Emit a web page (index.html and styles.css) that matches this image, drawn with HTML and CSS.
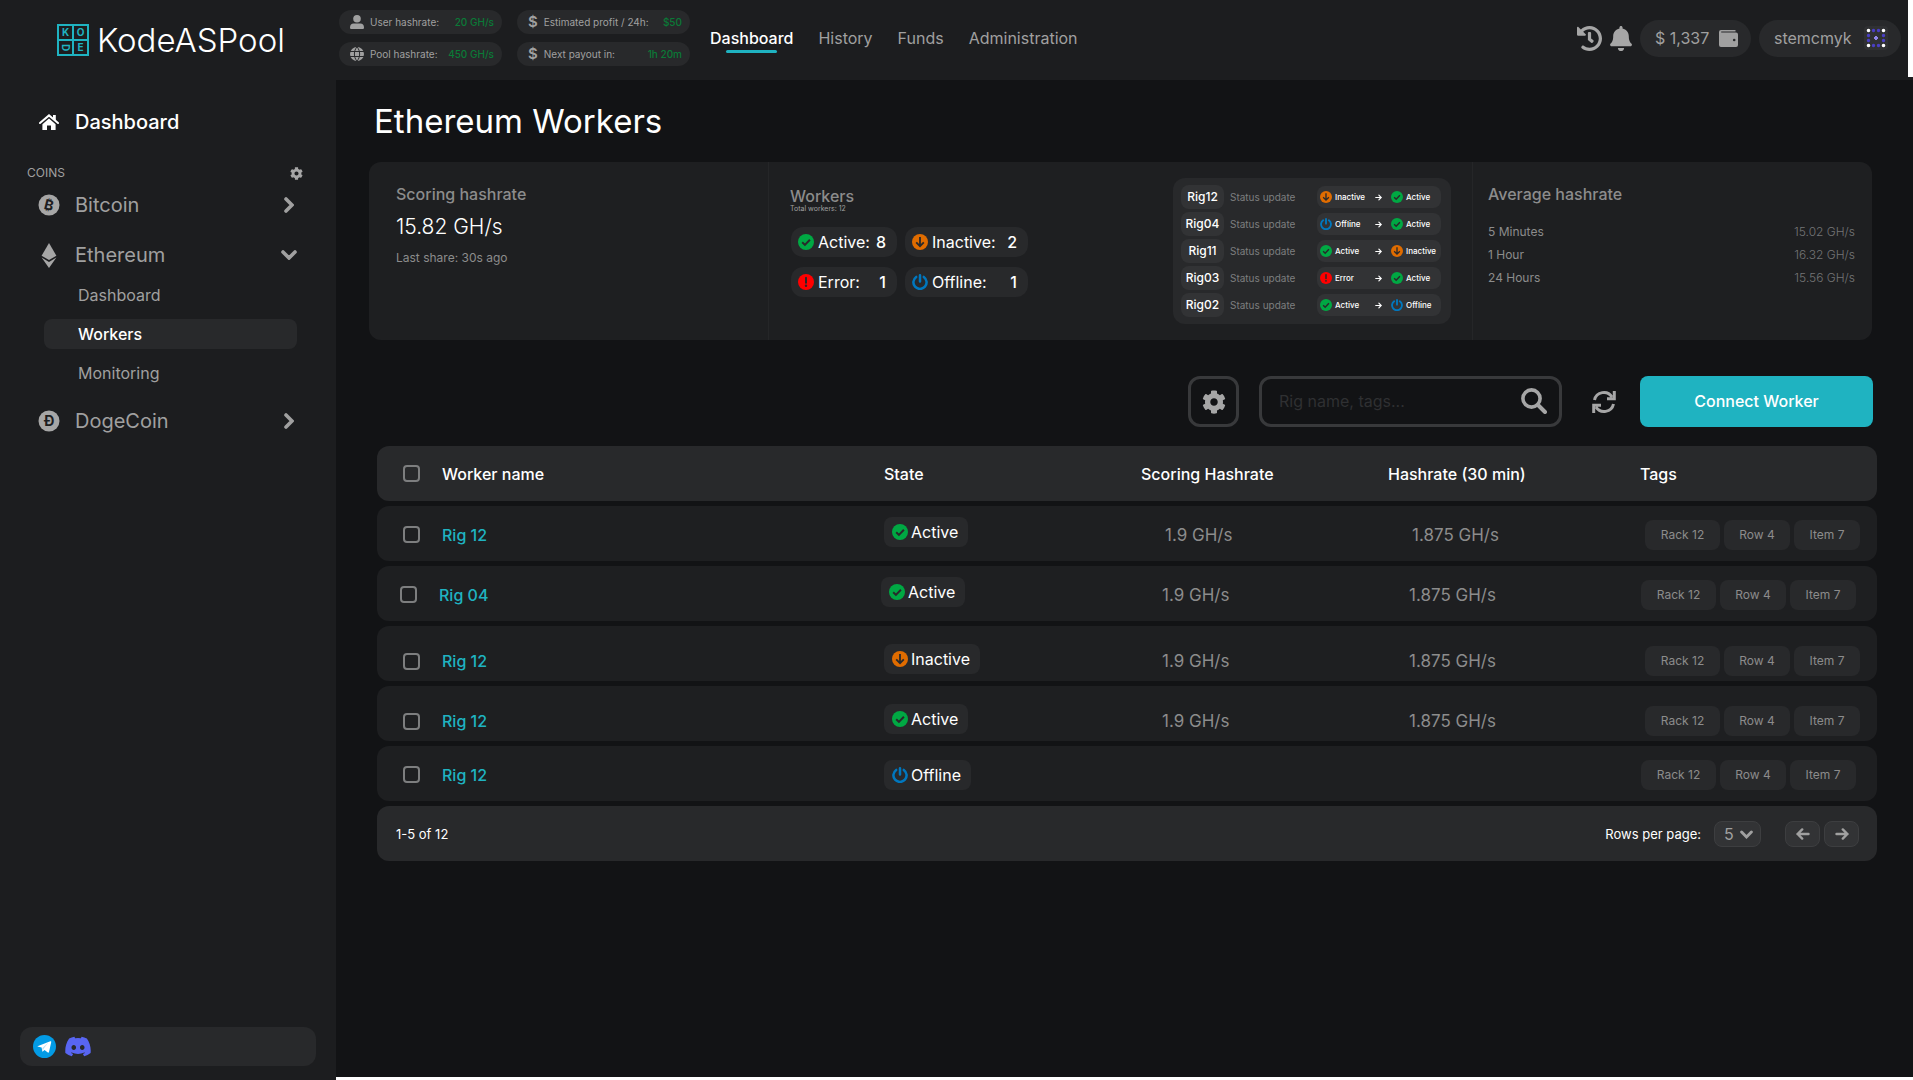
FILE: index.html
```html
<!DOCTYPE html>
<html lang="en">
<head>
    <meta charset="UTF-8">
    <meta name="viewport" content="width=device-width, initial-scale=1.0">
    <title>KodeASPool - Ethereum Workers</title>
    <link rel="stylesheet" href="styles.css">
</head>
<body>
    <!-- Icon sprite -->
    <svg class="sprite" aria-hidden="true">
        <symbol id="i-check" viewBox="0 0 16 16"><circle cx="8" cy="8" r="8" fill="#00a843"/><path d="M4.2 8.3l2.7 2.6 5-5.2" fill="none" stroke="#28292b" stroke-width="2"/></symbol>
        <symbol id="i-down" viewBox="0 0 16 16"><circle cx="8" cy="8" r="8" fill="#e06c00"/><path d="M8 3v9M4.2 8.4L8 12.2l3.8-3.8" fill="none" stroke="#28292b" stroke-width="1.8"/></symbol>
        <symbol id="i-error" viewBox="0 0 16 16"><circle cx="8" cy="8" r="8" fill="#f00"/><path d="M8 3.8v5" stroke="#28292b" stroke-width="2" stroke-linecap="round"/><circle cx="8" cy="11.8" r="1.2" fill="#28292b"/></symbol>
        <symbol id="i-power" viewBox="0 0 16 16"><path d="M4.200 2.900a6.600 6.600 0 1 0 7.600 0M8 1.300v6.200" fill="none" stroke="#0077be" stroke-width="2.500" stroke-linecap="round"/></symbol>
        <symbol id="i-gear" viewBox="0 0 512 512"><path fill="currentColor" d="M487.4 315.7l-42.6-24.6c4.3-23.2 4.3-47 0-70.2l42.6-24.6c4.9-2.8 7.1-8.6 5.5-14-11.1-35.6-30-67.8-54.7-94.6-3.8-4.1-10-5.1-14.8-2.3L380.8 110c-17.9-15.4-38.5-27.3-60.8-35.1V25.8c0-5.6-3.9-10.5-9.4-11.7-36.7-8.2-74.3-7.8-109.2 0-5.5 1.2-9.4 6.1-9.4 11.7V75c-22.2 7.9-42.8 19.8-60.8 35.1L88.7 85.5c-4.9-2.8-11-1.9-14.8 2.3-24.7 26.7-43.6 58.9-54.7 94.6-1.7 5.4.6 11.2 5.5 14L67.3 221c-4.3 23.2-4.3 47 0 70.2l-42.6 24.6c-4.9 2.8-7.1 8.6-5.5 14 11.1 35.6 30 67.8 54.7 94.6 3.8 4.1 10 5.1 14.8 2.3l42.6-24.6c17.9 15.4 38.5 27.3 60.8 35.1v49.2c0 5.6 3.9 10.5 9.4 11.7 36.7 8.2 74.3 7.8 109.2 0 5.5-1.2 9.4-6.1 9.4-11.7v-49.2c22.2-7.9 42.8-19.8 60.8-35.1l42.6 24.6c4.9 2.8 11 1.9 14.8-2.3 24.7-26.7 43.6-58.9 54.7-94.6 1.5-5.5-.7-11.3-5.6-14.1zM256 336c-44.1 0-80-35.9-80-80s35.9-80 80-80 80 35.9 80 80-35.9 80-80 80z"/></symbol>
        <symbol id="i-right" viewBox="0 0 10 16"><path d="M2 2l6 6-6 6" fill="none" stroke="currentColor" stroke-width="3.6" stroke-linecap="round"/></symbol>
        <symbol id="i-chevdown" viewBox="0 0 16 10"><path d="M2 2l6 6 6-6" fill="none" stroke="currentColor" stroke-width="3.6" stroke-linecap="round"/></symbol>
        <symbol id="i-arrow" viewBox="0 0 14 12"><path d="M1.5 6h11M7.8 1.4L12.4 6l-4.6 4.6" fill="none" stroke="currentColor" stroke-width="2.4" stroke-linecap="round"/></symbol>
    </svg>

    <!-- Sidebar -->
    <aside class="sidebar">
        <a class="logo" href="#">
            <svg width="32" height="32" viewBox="0 0 32 32" fill="none" stroke="#1fb3c1" stroke-width="2">
                <path d="M1 1h30v30H1zM16 1v30M1 16h30"/>
                <g class="logo-letters">
                    <text x="8.5" y="12">K</text>
                    <text x="23.5" y="12">O</text>
                    <text x="8.5" y="27" transform="rotate(90 8.5 23.5)">D</text>
                    <text x="23.5" y="27">E</text>
                </g>
            </svg>
            <span>KodeASPool</span>
        </a>

        <nav class="side-nav">
            <a class="side-item active" href="#">
                <svg width="20" height="17" viewBox="0 0 20 17">
                    <path d="M1 9l9-7.6L19 9" fill="none" stroke="currentColor" stroke-width="2" stroke-linecap="round"/>
                    <path d="M14 1h2.8v5.4L14 4zM10 4.6l6.6 5.6V16H12v-4.6H8V16H3.400v-5.800z" fill="currentColor"/>
                </svg>
                <span>Dashboard</span>
            </a>
            <div class="side-title">
                <span>COINS</span>
                <button class="icon-button" aria-label="Coin settings"><svg width="13" height="13"><use href="#i-gear"/></svg></button>
            </div>
            <a class="side-item" href="#">
                <svg width="22" height="22" viewBox="0 0 22 22"><circle cx="11" cy="11" r="10.500" fill="#a6a6a6"/><text class="coin-sign" x="11" y="16" transform="rotate(14 11 11)">₿</text></svg>
                <span>Bitcoin</span>
                <svg class="chevron" width="10" height="16"><use href="#i-right"/></svg>
            </a>
            <a class="side-item" href="#">
                <svg width="22" height="25" viewBox="0 0 22 25" fill="#a6a6a6"><path d="M11 0l7.400 12.700L11 17 3.600 12.700z"/><path d="M3.600 14.500L11 18.900l7.400-4.400L11 25z"/></svg>
                <span>Ethereum</span>
                <svg class="chevron" width="16" height="10"><use href="#i-chevdown"/></svg>
            </a>
            <div class="sub-nav">
                <a href="#">Dashboard</a>
                <a class="active" href="#">Workers</a>
                <a href="#">Monitoring</a>
            </div>
            <a class="side-item" href="#">
                <svg width="22" height="22" viewBox="0 0 22 22"><circle cx="11" cy="11" r="10.500" fill="#a6a6a6"/><text class="coin-sign" x="11" y="16">Ð</text></svg>
                <span>DogeCoin</span>
                <svg class="chevron" width="10" height="16"><use href="#i-right"/></svg>
            </a>
        </nav>

        <div class="social">
            <a href="#" aria-label="Telegram">
                <svg width="23" height="23" viewBox="0 0 23 23"><circle cx="11.500" cy="11.500" r="11.500" fill="#039be5"/><path d="M4.500 11.300L17.300 6.300c.6-.2 1.100.1.9 1L16 16.900c-.2.800-.6.900-1.200.600l-3.300-2.500-1.700 1.600c-.3.200-.5.100-.5-.3l-.7-3.700-4-1.100z" fill="#fff"/><path d="M9.400 16.300v-3.400l6-5.400-4.600 6z" fill="#bcdff3"/></svg>
            </a>
            <a href="#" aria-label="Discord">
                <svg width="26" height="21" viewBox="20 30 600 452"><path fill="#5865f2" d="M524.531,69.836a1.5,1.5,0,0,0-.764-.7A485.065,485.065,0,0,0,404.081,32.03a1.816,1.816,0,0,0-1.923.91,337.461,337.461,0,0,0-14.9,30.6,447.848,447.848,0,0,0-134.426,0,309.541,309.541,0,0,0-15.135-30.6,1.89,1.89,0,0,0-1.924-.91A483.689,483.689,0,0,0,116.085,69.137a1.712,1.712,0,0,0-.788.676C39.068,183.651,18.186,294.69,28.43,404.354a2.016,2.016,0,0,0,.765,1.375A487.666,487.666,0,0,0,176.02,479.918a1.9,1.9,0,0,0,2.063-.676A348.2,348.2,0,0,0,208.12,430.4a1.86,1.86,0,0,0-1.019-2.588,321.173,321.173,0,0,1-45.868-21.853,1.885,1.885,0,0,1-.185-3.126c3.082-2.309,6.166-4.711,9.109-7.137a1.819,1.819,0,0,1,1.9-.256c96.229,43.917,200.41,43.917,295.5,0a1.812,1.812,0,0,1,1.924.233c2.944,2.426,6.027,4.851,9.132,7.16a1.884,1.884,0,0,1-.162,3.126,301.407,301.407,0,0,1-45.89,21.83,1.875,1.875,0,0,0-1,2.611,391.055,391.055,0,0,0,30.014,48.815,1.864,1.864,0,0,0,2.063.7A486.048,486.048,0,0,0,610.7,405.729a1.882,1.882,0,0,0,.765-1.352C623.729,277.594,590.933,167.465,524.531,69.836ZM222.491,337.58c-28.972,0-52.844-26.587-52.844-59.239S193.056,219.1,222.491,219.1c29.665,0,53.306,26.82,52.843,59.239C275.334,310.993,251.924,337.58,222.491,337.58Zm195.38,0c-28.971,0-52.843-26.587-52.843-59.239S388.437,219.1,417.871,219.1c29.667,0,53.307,26.82,52.844,59.239C470.715,310.993,447.538,337.58,417.871,337.58Z"/></svg>
            </a>
        </div>
    </aside>

    <div class="page">
        <!-- Top bar -->
        <header class="topbar">
            <div class="quick-stats">
                <div class="quick">
                    <svg width="14" height="14" viewBox="0 0 14 14" fill="currentColor"><circle cx="7" cy="3.800" r="3.800"/><path d="M0 12.500C0 9.800 1.500 8.700 3.500 8.500h7c2 .2 3.500 1.300 3.500 4 0 1-.6 1.500-1.500 1.500h-11C.6 14 0 13.500 0 12.500z"/></svg>
                    <span>User hashrate:</span><b>20 GH/s</b>
                </div>
                <div class="quick">
                    <i class="dollar">$</i>
                    <span>Estimated profit / 24h:</span><b>$50</b>
                </div>
                <div class="quick">
                    <svg width="14" height="14" viewBox="0 0 14 14"><circle cx="7" cy="7" r="7" fill="currentColor"/><path d="M0 4.500h14M0 9.500h14M7 0C3.500 3.500 3.500 10.500 7 14c3.500-3.500 3.500-10.500 0-14z" fill="none" stroke="#28292b"/></svg>
                    <span>Pool hashrate:</span><b>450 GH/s</b>
                </div>
                <div class="quick">
                    <i class="dollar">$</i>
                    <span>Next payout in:</span><b>1h 20m</b>
                </div>
            </div>
            <nav class="top-nav">
                <a class="active" href="#">Dashboard</a>
                <a href="#">History</a>
                <a href="#">Funds</a>
                <a href="#">Administration</a>
            </nav>
            <div class="account">
                <button class="icon-button" aria-label="Activity">
                    <svg width="25" height="25" viewBox="8 8 496 496"><path fill="currentColor" d="M504 255.531c.253 136.64-111.18 248.372-247.82 248.468-59.015.042-113.223-20.53-155.822-54.911-11.077-8.94-11.905-25.541-1.839-35.607l11.267-11.267c8.609-8.609 22.353-9.551 31.891-1.984C173.062 425.135 212.781 440 256 440c101.705 0 184-82.311 184-184 0-101.705-82.311-184-184-184-48.814 0-93.149 18.969-126.068 49.932l50.754 50.754c10.08 10.08 2.941 27.314-11.313 27.314H24c-8.837 0-16-7.163-16-16V38.627c0-14.254 17.234-21.393 27.314-11.314l49.372 49.372C129.209 34.136 189.552 8 256 8c136.81 0 247.747 110.78 248 247.531zm-180.912 78.784l9.823-12.63c8.138-10.463 6.253-25.542-4.21-33.679L288 256.349V152c0-13.255-10.745-24-24-24h-16c-13.255 0-24 10.745-24 24v135.651l65.409 50.874c10.463 8.137 25.541 6.253 33.679-4.21z"/></svg>
                </button>
                <button class="icon-button" aria-label="Notifications">
                    <svg width="22" height="25" viewBox="0 0 448 512"><path fill="currentColor" d="M224 512c35.320 0 63.970-28.650 63.970-64H160.030c0 35.350 28.650 64 63.970 64zm215.390-149.710c-19.320-20.760-55.470-51.990-55.470-154.290 0-77.700-54.480-139.900-127.940-155.160V32c0-17.670-14.320-32-31.980-32s-31.980 14.330-31.980 32v20.840C118.560 68.100 64.080 130.300 64.080 208c0 102.300-36.150 133.530-55.470 154.290-6 6.450-8.660 14.160-8.610 21.710.11 16.400 12.980 32 32.100 32h383.800c19.120 0 32-15.600 32.100-32 .05-7.550-2.610-15.270-8.610-21.710z"/></svg>
                </button>
                <button class="account-pill">
                    <span>$ 1,337</span>
                    <svg width="19" height="17" viewBox="0 0 19 17"><path d="M2 0h14.500v1.500H2.200v1H17a2 2 0 0 1 2 2V15a2 2 0 0 1-2 2H2a2 2 0 0 1-2-2V2a2 2 0 0 1 2-2z" fill="currentColor"/><circle cx="15.200" cy="10" r="1.300" fill="#28292b"/></svg>
                </button>
                <button class="account-pill user">
                    <span>stemcmyk</span>
                    <svg width="24" height="24" viewBox="0 0 24 24"><rect width="24" height="24" rx="4" fill="#303133"/><path d="M9.500 4.500h.01M14.500 4.500h.01M9.500 19.500h.01M14.500 19.500h.01M4.500 9.500h.01M4.500 14.500h.01M19.500 9.500h.01M19.500 14.500h.01" stroke="#4a3fc4" stroke-width="3.400" stroke-linecap="round"/><path d="M4.500 4.500h.01M19.500 4.500h.01M4.500 19.500h.01M19.500 19.500h.01" stroke="#fff" stroke-width="3.600" stroke-linecap="round"/><path d="M12 10v4M10 12h4" stroke="#8f86e8" stroke-width="2"/></svg>
                </button>
            </div>
        </header>

        <main class="content">
            <h1>Ethereum Workers</h1>

            <!-- Summary -->
            <section class="summary">
                <div class="panel">
                    <h2>Scoring hashrate</h2>
                    <p class="big">15.82 GH/s</p>
                    <p class="note">Last share: 30s ago</p>
                </div>
                <div class="panel workers">
                    <div>
                        <h2>Workers</h2>
                        <p class="tiny">Total workers: 12</p>
                        <div class="counts">
                            <div class="count"><svg width="16" height="16"><use href="#i-check"/></svg><span>Active:</span><b>8</b></div>
                            <div class="count"><svg width="16" height="16"><use href="#i-down"/></svg><span>Inactive:</span><b>2</b></div>
                            <div class="count"><svg width="16" height="16"><use href="#i-error"/></svg><span>Error:</span><b>1</b></div>
                            <div class="count"><svg width="16" height="16"><use href="#i-power"/></svg><span>Offline:</span><b>1</b></div>
                        </div>
                    </div>
                    <ul class="updates">
                        <li>
                            <span class="rig">Rig12</span><span class="what">Status update</span>
                            <span class="change"><svg width="12" height="12"><use href="#i-down"/></svg><span>Inactive</span><svg class="to" width="7" height="7"><use href="#i-arrow"/></svg><svg width="12" height="12"><use href="#i-check"/></svg><span>Active</span></span>
                        </li>
                        <li>
                            <span class="rig">Rig04</span><span class="what">Status update</span>
                            <span class="change"><svg width="12" height="12"><use href="#i-power"/></svg><span>Offline</span><svg class="to" width="7" height="7"><use href="#i-arrow"/></svg><svg width="12" height="12"><use href="#i-check"/></svg><span>Active</span></span>
                        </li>
                        <li>
                            <span class="rig">Rig11</span><span class="what">Status update</span>
                            <span class="change"><svg width="12" height="12"><use href="#i-check"/></svg><span>Active</span><svg class="to" width="7" height="7"><use href="#i-arrow"/></svg><svg width="12" height="12"><use href="#i-down"/></svg><span>Inactive</span></span>
                        </li>
                        <li>
                            <span class="rig">Rig03</span><span class="what">Status update</span>
                            <span class="change"><svg width="12" height="12"><use href="#i-error"/></svg><span>Error</span><svg class="to" width="7" height="7"><use href="#i-arrow"/></svg><svg width="12" height="12"><use href="#i-check"/></svg><span>Active</span></span>
                        </li>
                        <li>
                            <span class="rig">Rig02</span><span class="what">Status update</span>
                            <span class="change"><svg width="12" height="12"><use href="#i-check"/></svg><span>Active</span><svg class="to" width="7" height="7"><use href="#i-arrow"/></svg><svg width="12" height="12"><use href="#i-power"/></svg><span>Offline</span></span>
                        </li>
                    </ul>
                </div>
                <div class="panel average">
                    <h2>Average hashrate</h2>
                    <dl>
                        <div><dt>5 Minutes</dt><dd>15.02 GH/s</dd></div>
                        <div><dt>1 Hour</dt><dd>16.32 GH/s</dd></div>
                        <div><dt>24 Hours</dt><dd>15.56 GH/s</dd></div>
                    </dl>
                </div>
            </section>

            <!-- Toolbar -->
            <div class="toolbar">
                <button class="square-button" aria-label="Table settings"><svg width="24" height="24"><use href="#i-gear"/></svg></button>
                <form class="search" onsubmit="return false;">
                    <input type="text" placeholder="Rig name, tags..." aria-label="Search rigs">
                    <button class="icon-button" aria-label="Search">
                        <svg width="26" height="26" viewBox="0 0 26 26" fill="none" stroke="currentColor"><circle cx="10.500" cy="10.500" r="8.600" stroke-width="3.600"/><path d="M17 17l7 7" stroke-width="4" stroke-linecap="round"/></svg>
                    </button>
                </form>
                <button class="icon-button refresh" aria-label="Refresh">
                    <svg width="24" height="24" viewBox="0 0 24 24" fill="none" stroke="currentColor" stroke-width="3"><path d="M2.500 10A9.600 9.600 0 0 1 20 7M22.300 1v7.700H15M21.500 14A9.600 9.600 0 0 1 4 17M1.700 23v-7.700H9"/></svg>
                </button>
                <button class="connect">Connect Worker</button>
            </div>

            <!-- Workers table -->
            <table class="rigs">
                <colgroup>
                    <col class="c-check"><col><col class="c-state"><col class="c-score"><col class="c-rate"><col class="c-tags">
                </colgroup>
                <thead>
                    <tr>
                        <th><input type="checkbox" aria-label="Select all"></th>
                        <th>Worker name</th>
                        <th>State</th>
                        <th>Scoring Hashrate</th>
                        <th>Hashrate (30 min)</th>
                        <th>Tags</th>
                    </tr>
                </thead>
                <tbody>
                    <tr>
                        <td><input type="checkbox" aria-label="Select Rig 12"></td>
                        <td><a href="#">Rig 12</a></td>
                        <td class="state"><span class="badge"><svg width="16" height="16"><use href="#i-check"/></svg>Active</span></td>
                        <td class="rate">1.9 GH/s</td>
                        <td class="rate">1.875 GH/s</td>
                        <td class="tags"><div><span>Rack 12</span><span>Row 4</span><span>Item 7</span></div></td>
                    </tr>
                    <tr class="tight">
                        <td><input type="checkbox" aria-label="Select Rig 04"></td>
                        <td><a href="#">Rig 04</a></td>
                        <td class="state"><span class="badge"><svg width="16" height="16"><use href="#i-check"/></svg>Active</span></td>
                        <td class="rate">1.9 GH/s</td>
                        <td class="rate">1.875 GH/s</td>
                        <td class="tags"><div><span>Rack 12</span><span>Row 4</span><span>Item 7</span></div></td>
                    </tr>
                    <tr class="low">
                        <td><input type="checkbox" aria-label="Select Rig 12"></td>
                        <td><a href="#">Rig 12</a></td>
                        <td class="state"><span class="badge"><svg width="16" height="16"><use href="#i-down"/></svg>Inactive</span></td>
                        <td class="rate">1.9 GH/s</td>
                        <td class="rate">1.875 GH/s</td>
                        <td class="tags"><div><span>Rack 12</span><span>Row 4</span><span>Item 7</span></div></td>
                    </tr>
                    <tr class="low">
                        <td><input type="checkbox" aria-label="Select Rig 12"></td>
                        <td><a href="#">Rig 12</a></td>
                        <td class="state"><span class="badge"><svg width="16" height="16"><use href="#i-check"/></svg>Active</span></td>
                        <td class="rate">1.9 GH/s</td>
                        <td class="rate">1.875 GH/s</td>
                        <td class="tags"><div><span>Rack 12</span><span>Row 4</span><span>Item 7</span></div></td>
                    </tr>
                    <tr>
                        <td><input type="checkbox" aria-label="Select Rig 12"></td>
                        <td><a href="#">Rig 12</a></td>
                        <td><span class="badge"><svg width="16" height="16"><use href="#i-power"/></svg>Offline</span></td>
                        <td></td>
                        <td></td>
                        <td class="tags tight"><div><span>Rack 12</span><span>Row 4</span><span>Item 7</span></div></td>
                    </tr>
                </tbody>
            </table>
            <div class="pager">
                <span>1-5 of 12</span>
                <div class="pager-right">
                    <label for="rows">Rows per page:</label>
                    <div class="select">
                        <select id="rows"><option>5</option><option>10</option><option>25</option></select>
                        <svg width="13" height="9"><use href="#i-chevdown"/></svg>
                    </div>
                    <div class="pager-buttons">
                        <button aria-label="Previous page"><svg class="back" width="14" height="12"><use href="#i-arrow"/></svg></button>
                        <button aria-label="Next page"><svg width="14" height="12"><use href="#i-arrow"/></svg></button>
                    </div>
                </div>
            </div>
        </main>
    </div>
</body>
</html>
```
FILE: styles.css
```css
* { box-sizing: border-box; }
body {
    margin: 0;
    min-height: 100vh;
    display: grid;
    grid-template-columns: 336px 1fr;
    background-color: #121315;
    color: #a0a0a0;
    font-family: Inter, "Liberation Sans", sans-serif;
    font-size: 16px;
    line-height: 20px;
}
body::after {
    content: "";
    position: absolute;
    top: 0;
    right: 0;
    width: 5px;
    height: 77px;
    background-color: white;
}
h1, h2, p, ul, dl, dd { margin: 0; padding: 0; }
svg { display: block; flex: none; }
a { color: inherit; text-decoration: none; }
button, input, select {
    font: inherit;
    color: inherit;
    background: none;
    border: none;
    margin: 0;
    padding: 0;
}
button { cursor: pointer; }
.sprite {
    position: absolute;
    width: 0;
    height: 0;
}
.icon-button { color: #a6a6a6; }

/* Sidebar */
.sidebar {
    background-color: #1c1d1f;
    display: flex;
    flex-direction: column;
    padding: 20px 20px 14px;
}
.logo {
    display: flex;
    align-items: center;
    gap: 8px;
    height: 40px;
    padding-left: 37px;
    color: white;
    font-size: 33px;
    font-weight: 300;
}
.logo-letters text {
    fill: #1fb3c1;
    stroke: none;
    font-size: 10px;
    font-weight: 700;
    text-anchor: middle;
}
.side-nav { padding-top: 37px; }
.side-item {
    display: grid;
    grid-template-columns: 22px 1fr 16px;
    align-items: center;
    justify-items: center;
    gap: 15px;
    height: 50px;
    padding: 0 19px 0 18px;
    font-size: 20px;
}
.side-item span { justify-self: start; }
.side-item.active {
    color: white;
    font-weight: 500;
}
.side-title {
    display: flex;
    align-items: center;
    justify-content: space-between;
    height: 32px;
    padding: 0 13px 0 7px;
    margin-top: 10px;
    margin-bottom: -9px;
    font-size: 12px;
}
.coin-sign {
    fill: #1c1d1f;
    font-size: 14px;
    font-weight: 700;
    text-anchor: middle;
}
.sub-nav {
    display: flex;
    flex-direction: column;
    gap: 9px;
    padding: 0 0 8px 24px;
}
.sub-nav a {
    height: 30px;
    margin-right: 19px;
    padding: 5px 34px;
    border-radius: 8px;
}
.sub-nav .active {
    background-color: #28292b;
    color: white;
    font-weight: 500;
}
.social {
    display: flex;
    align-items: center;
    gap: 9px;
    height: 39px;
    margin-top: auto;
    padding: 0 13px;
    border-radius: 12px;
    background-color: #28292b;
}

/* Top bar */
.page {
    display: flex;
    flex-direction: column;
    border-bottom: 3px solid white;
}
.topbar {
    display: flex;
    align-items: center;
    height: 80px;
    padding: 0 12px 4px 3px;
    background-color: #1c1d1f;
}
.quick-stats {
    display: grid;
    grid-template-columns: 163px 173px;
    gap: 8px 15px;
}
.quick {
    display: flex;
    align-items: center;
    gap: 6px;
    height: 24px;
    padding: 0 8px 0 11px;
    border-radius: 12px;
    background-color: #28292b;
    font-size: 10px;
}
.quick b {
    margin-left: auto;
    color: #0a7a37;
    font-weight: 500;
}
.dollar {
    font-size: 15px;
    font-style: normal;
    font-weight: 600;
}
.top-nav {
    display: flex;
    gap: 25px;
    margin-left: 20px;
}
.top-nav a { position: relative; }
.top-nav .active {
    color: white;
    font-weight: 500;
}
.top-nav .active::after {
    content: "";
    position: absolute;
    left: 16px;
    right: 16px;
    bottom: -5px;
    height: 3px;
    border-radius: 2px;
    background-color: #1fb3c1;
}
.account {
    display: flex;
    align-items: center;
    gap: 8px;
    margin-left: auto;
}
.account-pill {
    display: flex;
    align-items: center;
    justify-content: space-between;
    width: 111px;
    height: 37px;
    padding: 0 13px 0 15px;
    border-radius: 19px;
    background-color: #28292b;
    white-space: nowrap;
}
.account-pill.user { width: 142px; }

/* Content */
.content { padding: 21px 36px 20px 33px; }
h1 {
    margin: 0 0 21px 5px;
    color: white;
    font-size: 33px;
    font-weight: 400;
    line-height: 40px;
}
.summary {
    display: grid;
    grid-template-columns: 399fr 704fr 400fr;
    min-height: 178px;
    margin-right: 5px;
    border-radius: 12px;
    background-color: #1e1f21;
}
.panel { padding: 22px 17px 16px 15px; }
.panel:first-child { padding-left: 27px; }
.panel + .panel { border-left: 1px solid #252628; }
h2 {
    color: #8c8c8c;
    font-size: 16px;
    font-weight: 500;
    line-height: 20px;
}
.big {
    margin-top: 10px;
    color: white;
    font-size: 21px;
    font-weight: 300;
    line-height: 26px;
}
.note {
    margin-top: 8px;
    color: #8c8c8c;
    font-size: 12px;
}
.workers {
    display: flex;
    justify-content: space-between;
    padding: 16px 21px 16px 21px;
}
.workers h2 { margin-top: 8px; }
.tiny {
    font-size: 7px;
    line-height: 6px;
}
.counts {
    display: grid;
    grid-template-columns: 106px 123px;
    gap: 10px 8px;
    margin: 15px 0 0 1px;
}
.count {
    display: flex;
    align-items: center;
    gap: 4px;
    height: 30px;
    padding: 0 11px 0 7px;
    border-radius: 12px;
    background-color: #28292b;
    color: white;
}
.count b {
    margin-left: auto;
    font-weight: 500;
}
.updates {
    display: flex;
    flex-direction: column;
    gap: 3px;
    width: 278px;
    height: 146px;
    padding: 7px 10px 8px 8px;
    border-radius: 12px;
    background-color: #28292b;
    list-style: none;
}
.updates li {
    display: grid;
    grid-template-columns: 43px 1fr 124px;
    align-items: center;
    gap: 6px;
    height: 24px;
}
.rig, .change {
    border-radius: 8px;
    background-color: #323335;
    color: white;
}
.rig {
    height: 24px;
    font-size: 12px;
    font-weight: 500;
    line-height: 24px;
    text-align: center;
}
.what {
    color: #7d7e7f;
    font-size: 10px;
}
.change {
    display: grid;
    grid-template-columns: 12px 37px 13px 12px 1fr;
    align-items: center;
    column-gap: 3px;
    height: 22px;
    padding-left: 3px;
    font-size: 8px;
    font-weight: 500;
}
.average dl {
    display: flex;
    flex-direction: column;
    gap: 3px;
    margin-top: 18px;
    font-size: 12px;
    color: #8c8c8c;
}
.average dl div {
    display: flex;
    justify-content: space-between;
}
.average dd {
    color: #747576;
    font-weight: 300;
}

/* Toolbar */
.toolbar {
    display: flex;
    align-items: center;
    justify-content: flex-end;
    height: 51px;
    margin: 36px 4px 14px 0;
}
.square-button, .search {
    height: 51px;
    border: 3px solid #38393b;
    border-radius: 12px;
}
.square-button {
    display: flex;
    align-items: center;
    justify-content: center;
    width: 51px;
    color: #a6a6a6;
}
.search {
    display: flex;
    align-items: center;
    width: 303px;
    margin: 0 30px 0 20px;
    padding: 0 12px 2px 17px;
}
.search input {
    flex: 1;
    min-width: 0;
    outline: none;
}
.search input::placeholder {
    color: #2f3032;
    opacity: 1;
}
.refresh { margin-right: 24px; }
.connect {
    width: 233px;
    height: 51px;
    padding-bottom: 2px;
    border-radius: 8px;
    background-color: #1fb3c1;
    color: white;
    font-weight: 500;
}

/* Table */
.rigs {
    width: calc(100% - 8px);
    margin-left: 8px;
    table-layout: fixed;
    border-collapse: separate;
    border-spacing: 0 5px;
}
.c-check { width: 65px; }
.c-state { width: 257px; }
.c-score { width: 247px; }
.c-rate { width: 252px; }
.c-tags { width: 237px; }
.rigs th, .rigs td {
    height: 55px;
    padding: 0;
    background-color: #1e1f21;
    text-align: left;
    vertical-align: middle;
}
.rigs td { padding-top: 2px; }
.rigs th {
    background-color: #28292b;
    color: white;
    font-weight: 500;
}
.rigs th:first-child, .rigs td:first-child {
    padding-left: 26px;
    border-radius: 12px 0 0 12px;
}
.rigs th:last-child, .rigs td:last-child { border-radius: 0 12px 12px 0; }
.rigs input {
    display: block;
    width: 17px;
    height: 17px;
    border: 2px solid #7d7e7f;
    border-radius: 4px;
    appearance: none;
}
.rigs input:checked { background-color: #1fb3c1; }
.rigs td a {
    color: #1fb3c1;
    font-weight: 500;
}
.rigs .state { padding-bottom: 5px; }
.rigs .rate {
    padding-left: 24px;
    font-size: 17px;
    color: #8c8c8c;
}
.rigs .low td { padding-top: 15px; }
.badge {
    display: inline-flex;
    align-items: center;
    gap: 3px;
    height: 30px;
    padding: 0 10px 0 8px;
    border-radius: 8px;
    background-color: #28292b;
    color: white;
    vertical-align: middle;
}
.tags div {
    display: flex;
    gap: 4px;
    padding-left: 5px;
}
.tags span {
    width: 66px;
    height: 30px;
    border-radius: 8px;
    background-color: #28292b;
    color: #8c8c8c;
    font-size: 12px;
    line-height: 30px;
    text-align: center;
}
.tags span:first-child { width: 75px; }
.rigs .tight td:first-child { padding-left: 23px; }
.rigs .tight td a, .rigs .tight .badge { margin-left: -3px; }
.rigs .tight .rate, .rigs .low .rate { padding-left: 21px; }
.tight.tags div, .tight .tags div { padding-left: 1px; }
.pager {
    display: flex;
    align-items: center;
    justify-content: space-between;
    height: 55px;
    margin-left: 8px;
    padding: 0 18px 0 19px;
    border-radius: 12px;
    background-color: #28292b;
    color: white;
    font-size: 13px;
}
.pager-right, .pager-buttons {
    display: flex;
    align-items: center;
}
.pager-buttons { gap: 4px; }
.select {
    position: relative;
    margin: 0 24px 0 13px;
    color: #a0a0a0;
}
.select select {
    display: block;
    width: 47px;
    height: 26px;
    padding-left: 9px;
    border: 1px solid #3d3e40;
    border-radius: 8px;
    background-color: #323335;
    font-size: 16px;
    appearance: none;
}
.select svg {
    position: absolute;
    top: 9px;
    right: 8px;
    pointer-events: none;
}
.pager-buttons button {
    display: flex;
    align-items: center;
    justify-content: center;
    width: 35px;
    height: 26px;
    border: 1px solid #3d3e40;
    border-radius: 8px;
    background-color: #323335;
    color: #a0a0a0;
}
.back { transform: rotate(180deg); }
```
